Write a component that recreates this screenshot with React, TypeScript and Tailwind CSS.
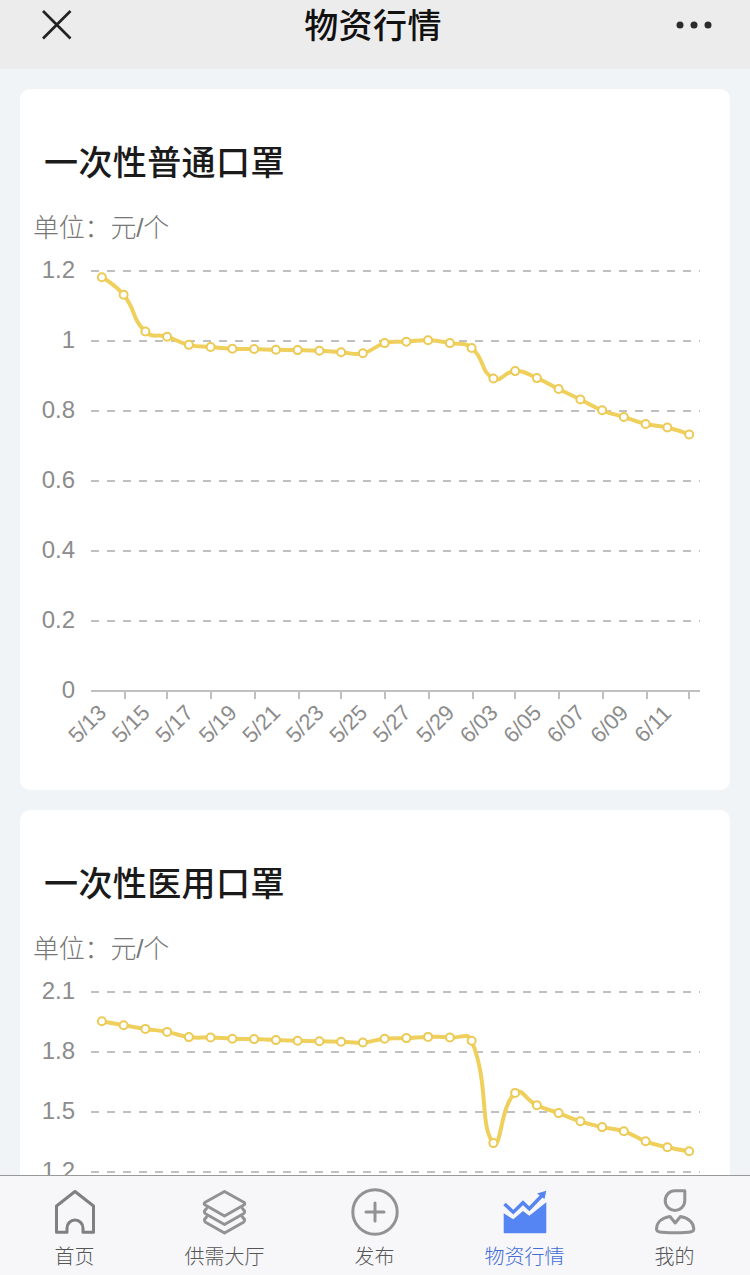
import type { ReactNode } from 'react';
import clsx from 'clsx';

interface PriceChartProps {
  title: string;
  values: number[];
  max: number;
  step: number;
}

const days = [
  '5/13', '5/14', '5/15', '5/16', '5/17', '5/18', '5/19', '5/20', '5/21', '5/22',
  '5/23', '5/24', '5/25', '5/26', '5/27', '5/28', '5/29', '6/02', '6/03', '6/04',
  '6/05', '6/06', '6/07', '6/08', '6/09', '6/10', '6/11', '6/12'
];

const normalMask = [
  1.18, 1.13, 1.025, 1.01, 0.987, 0.981, 0.976, 0.975, 0.973, 0.972,
  0.97, 0.966, 0.963, 0.992, 0.996, 1.0, 0.992, 0.978, 0.891, 0.912,
  0.892, 0.861, 0.831, 0.8, 0.781, 0.761, 0.751, 0.731
];

const medicalMask = [
  1.95, 1.93, 1.912, 1.897, 1.871, 1.869, 1.863, 1.861, 1.856, 1.853,
  1.85, 1.848, 1.844, 1.863, 1.866, 1.872, 1.869, 1.853, 1.341, 1.592,
  1.53, 1.491, 1.45, 1.421, 1.4, 1.35, 1.32, 1.3
];

// plot area inside the 710px wide card
const LEFT = 71;
const RIGHT = 680;
const TOP = 182;
const HEIGHT = 420;
const BAND = (RIGHT - LEFT) / days.length;

type Point = [number, number];

// control points follow the neighbours' direction, scaled by segment length
function smoothPath(points: Point[], smooth = 0.5) {
  let d = `M${points[0][0]} ${points[0][1]}`;
  let cp0 = points[0];

  for (let i = 1; i < points.length; i++) {
    const p = points[i];
    const prev = points[i - 1];
    const next = points[i + 1];
    let cp1 = p;
    let nextCp0 = p;
    if (next) {
      const v = [next[0] - prev[0], next[1] - prev[1]];
      const lenPrev = Math.hypot(p[0] - prev[0], p[1] - prev[1]);
      const lenNext = Math.hypot(p[0] - next[0], p[1] - next[1]);
      const ratio = lenNext / (lenPrev + lenNext);
      cp1 = [p[0] - v[0] * smooth * (1 - ratio), p[1] - v[1] * smooth * (1 - ratio)];
      nextCp0 = [p[0] + v[0] * smooth * ratio, p[1] + v[1] * smooth * ratio];
    }
    d += ` C${cp0[0]} ${cp0[1]} ${cp1[0]} ${cp1[1]} ${p[0]} ${p[1]}`;
    cp0 = nextCp0;
  }
  return d;
}

function PriceChart({ title, values, max, step }: PriceChartProps) {
  const rows = Math.round(max / step);
  const bottom = TOP + HEIGHT;
  const points = values.map((v, i): Point => [
    LEFT + BAND * (i + 0.5),
    bottom - (v / max) * HEIGHT - 0.7
  ]);

  return (
    <section className="relative h-[701px] shrink-0 rounded-[10px] bg-white">
      <h2 className="pl-6 pt-[49px] text-[34px] leading-[50px] font-medium tracking-[0.4px] text-[#1a1a1a]">
        {title}
      </h2>
      <p className="mt-[21px] pl-[13px] text-[26px] leading-[38px] font-light tracking-[-0.2px] text-[#777]">单位：元/个</p>

      <svg className="absolute inset-0" width="710" height="701" fontFamily="'Liberation Sans', Arial, sans-serif" fontSize="24" fill="#8c8c8c">
        {Array.from({ length: rows + 1 }, (_, i) => {
          const y = TOP + (HEIGHT / rows) * i;
          return (
            <g key={i}>
              <text x="55" y={y + 6.5} textAnchor="end">
                {Number((max - step * i).toFixed(1))}
              </text>
              <line
                x1={LEFT}
                x2={RIGHT}
                y1={y}
                y2={y}
                stroke="#c0c0c0"
                strokeWidth="2"
                strokeDasharray={i < rows ? '8 8' : undefined}
              />
            </g>
          );
        })}

        {days.map((day, i) => {
          const x = LEFT + BAND * (i + 0.5);
          if (i % 2) {
            const tick = 2 * Math.ceil((x - 1.2) / 2) + 1;
            return <line key={day} x1={tick} x2={tick} y1={bottom} y2={bottom + 8} stroke="#c0c0c0" strokeWidth="2" />;
          }
          return (
            <text
              key={day}
              textAnchor="middle"
              y="8"
              fontSize="22"
              transform={`translate(${x - 15} ${bottom + 32.5}) rotate(-45)`}
            >
              {day}
            </text>
          );
        })}

        <path d={smoothPath(points)} fill="none" stroke="#f0d05c" strokeWidth="4" />
        {points.map(([x, y]) => (
          <circle key={x} cx={x} cy={y} r="4" fill="#fff" stroke="#ecca55" strokeWidth="2" />
        ))}
      </svg>
    </section>
  );
}

function TabItem({ label, active, children }: { label: string; active?: boolean; children: ReactNode }) {
  return (
    <button className={clsx('flex flex-1 flex-col items-center pt-[11px]', active ? 'text-[#3f6cd6]' : 'text-[#555]')}>
      <svg
        width="50"
        height="50"
        viewBox="0 0 50 50"
        fill="none"
        stroke={active ? '#5585f2' : '#929292'}
        strokeWidth="3"
        strokeLinejoin="round"
        strokeLinecap="round"
      >
        {children}
      </svg>
      <span className="mt-[5px] mr-px text-[20px] leading-[30px] font-light">{label}</span>
    </button>
  );
}

export default function App() {
  return (
    <div className="flex h-[1275px] w-[750px] flex-col overflow-hidden bg-[#f1f4f7] font-['Liberation_Sans','Noto_Sans_CJK_SC',sans-serif]">
      <header className="flex h-[69px] shrink-0 items-start justify-between bg-[#ececec] pl-[42px] pr-[38px]">
        <svg className="mt-[10px]" width="30" height="30" stroke="#222" strokeWidth="2.7">
          <path d="M1 1L28.5 28.5M28.5 1L1 28.5" />
        </svg>
        <h1 className="mt-px mr-[2px] text-[34px] leading-[50px] font-medium tracking-[0.4px] text-[#111]">物资行情</h1>
        <svg className="mt-[20px]" width="36" height="10" fill="#2b2b2b">
          <circle cx="4" cy="5" r="3.5" />
          <circle cx="18" cy="5" r="3.5" />
          <circle cx="32" cy="5" r="3.5" />
        </svg>
      </header>

      <main className="flex min-h-0 flex-1 flex-col gap-5 overflow-hidden px-5 pt-5">
        <PriceChart title="一次性普通口罩" values={normalMask} max={1.2} step={0.2} />
        <PriceChart title="一次性医用口罩" values={medicalMask} max={2.1} step={0.3} />
      </main>

      <nav className="flex h-[100px] shrink-0 border-t border-[#999] bg-[#f7f7fa]">
        <TabItem label="首页">
          <path d="M6.5 19L25 4.5L43.5 19V45.3H33V41A8 8 0 0 0 17 41V45.3H6.5Z" stroke="#808080" />
        </TabItem>
        <TabItem label="供需大厅">
          <path d="M24.5 4.5L43.8 15.2Q45.8 16.7 43.8 18L24.5 29L5.2 18Q3.2 16.7 5.2 15.2Z" />
          <path d="M6.5 21.5L4.5 24Q4 25.7 5.5 26.8L24.5 37.5L43.5 26.8Q45 25.7 44.5 24L42.5 21.5" />
          <path d="M6.5 30L4.5 32.5Q4 34.2 5.5 35.3L24.5 46L43.5 35.3Q45 34.2 44.5 32.5L42.5 30" />
        </TabItem>
        <TabItem label="发布">
          <circle cx="25" cy="25" r="22.2" />
          <path d="M25 16V34M16 25H34" />
        </TabItem>
        <TabItem label="物资行情" active>
          <path d="M4.5 17L13.3 25.2L23 15.7L29.3 21.7L43 7.5" strokeWidth="3.5" strokeLinecap="butt" strokeLinejoin="miter" />
          <path d="M3.7 26.3L13.3 32.3L23 24L29.3 28.7L46.3 15.3V45.3Q46.3 46.3 45.3 46.3H4.7Q3.7 46.3 3.7 45.3Z" fill="#5585f2" stroke="none" />
          <path d="M37 6.5L46.3 3.7L44.5 12Z" fill="#5585f2" stroke="none" />
        </TabItem>
        <TabItem label="我的">
          <path d="M34.8 3.8H25A9.8 9.8 0 1 0 34.8 13.6Z" />
          <path d="M20 29.5C11 31 6.5 36 6.5 42C6.5 45 9 45.8 25 45.8C41 45.8 43.8 45 43.8 42C43.8 36 39 31 30.5 29.5L25.2 36Z" />
        </TabItem>
      </nav>
    </div>
  );
}
